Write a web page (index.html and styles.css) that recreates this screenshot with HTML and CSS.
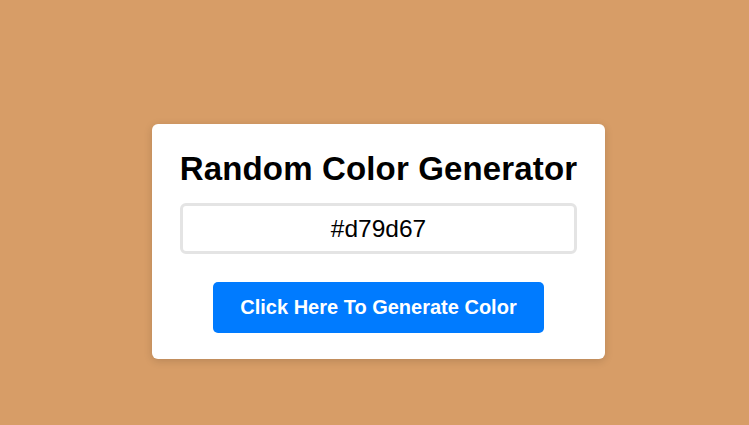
FILE: index.html
```html
<!DOCTYPE html>
<html>
<head>
<meta charset="utf-8">
<link rel="stylesheet" href="styles.css">
</head>
<body>
<div class="card">
  <h1 class="title">Random Color Generator</h1>
  <input class="hex" type="text" value="#d79d67" readonly>
  <button class="gen">Click Here To Generate Color</button>
</div>
</body>
</html>
```

FILE: styles.css
```css
html, body {
  margin: 0;
  height: 100%;
}
body {
  box-sizing: border-box;
  background: #d79d67;
  font-family: "Liberation Sans", Arial, sans-serif;
  display: flex;
  align-items: center;
  justify-content: center;
  padding-top: 58px;
  padding-left: 8px;
}
.card {
  background: #fff;
  border-radius: 6px;
  box-shadow: 0 2px 8px rgba(0,0,0,0.15);
  padding: 26px 28px;
  width: 397px;
  display: flex;
  flex-direction: column;
  align-items: center;
}
.title {
  margin: 0 0 16px;
  font-size: 33px;
  font-weight: bold;
  color: #000;
  line-height: 37px;
  white-space: nowrap;
  letter-spacing: 0.15px;
}
.hex {
  box-sizing: border-box;
  width: 100%;
  height: 51px;
  border: 3px solid #e4e4e4;
  border-radius: 6px;
  font-family: "Liberation Sans", Arial, sans-serif;
  font-size: 24.5px;
  text-align: center;
  color: #000;
  outline: none;
  padding: 0;
}
.gen {
  margin-top: 28px;
  width: 331px;
  height: 51px;
  background: #007bff;
  color: #fff;
  border: none;
  border-radius: 5px;
  font-family: "Liberation Sans", Arial, sans-serif;
  font-size: 20px;
  font-weight: bold;
  cursor: pointer;
}
```
